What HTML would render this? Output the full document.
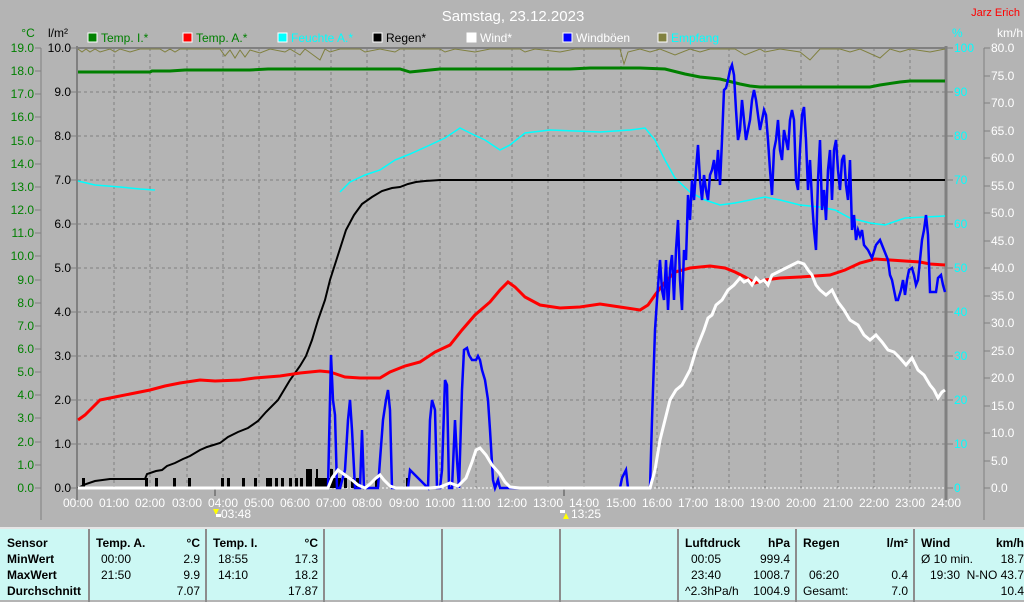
<!DOCTYPE html>
<html><head><meta charset="utf-8"><style>
html,body{margin:0;padding:0;width:1024px;height:600px;overflow:hidden;background:#b4b4b4;font-family:"Liberation Sans",sans-serif}
svg{position:absolute;left:0;top:0}
.p{position:absolute;left:0;top:527px;width:1024px;height:73px;background:#ccf8f4;border-top:2px solid #e6e6e6;box-sizing:border-box}
.c{position:absolute;top:0;height:73px;border-left:2px solid #8c8c8c;font-size:12px;color:#000}
.r{position:absolute;white-space:nowrap}
b{font-weight:bold}
</style></head><body>
<svg width="1024" height="527" font-family="Liberation Sans, sans-serif" font-size="12">
<text x="513" y="21" fill="#fff" font-size="15" text-anchor="middle">Samstag, 23.12.2023</text>
<text x="1020" y="16" fill="#f00" font-size="11" text-anchor="end">Jarz Erich</text>
<text x="28" y="37" fill="#008000" text-anchor="middle">°C</text>
<text x="58" y="37" fill="#000" text-anchor="middle">l/m²</text>
<text x="952" y="37" fill="#0ff">%</text>
<text x="1010" y="37" fill="#fff" text-anchor="middle">km/h</text>
<g stroke="#fff" stroke-width="1">
<rect x="88" y="33" width="9" height="9" fill="#008000"/>
<rect x="183" y="33" width="9" height="9" fill="#f00"/>
<rect x="278" y="33" width="9" height="9" fill="#0ff"/>
<rect x="373" y="33" width="9" height="9" fill="#000"/>
<rect x="467" y="33" width="9" height="9" fill="#fff"/>
<rect x="563" y="33" width="9" height="9" fill="#00f"/>
<rect x="658" y="33" width="9" height="9" fill="#808040"/>
</g>
<text x="101" y="42" fill="#008000">Temp. I.*</text>
<text x="196" y="42" fill="#008000">Temp. A.*</text>
<text x="291" y="42" fill="#0ff">Feuchte A.*</text>
<text x="386" y="42" fill="#000">Regen*</text>
<text x="480" y="42" fill="#fff">Wind*</text>
<text x="576" y="42" fill="#fff">Windböen</text>
<text x="671" y="42" fill="#0ff">Empfang</text>
<g stroke="#808080" stroke-dasharray="3,3" stroke-width="1">
<path d="M114 48V488M150 48V488M187 48V488M223 48V488M259 48V488M295 48V488M331 48V488M367 48V488M404 48V488M440 48V488M476 48V488M512 48V488M548 48V488M584 48V488M621 48V488M657 48V488M693 48V488M729 48V488M765 48V488M801 48V488M838 48V488M874 48V488M910 48V488"/>
<path d="M78 92H945M78 136H945M78 180H945M78 224H945M78 268H945M78 312H945M78 356H945M78 400H945M78 444H945"/>
</g>
<path d="M78 488H945" stroke="#fff" stroke-width="1" stroke-dasharray="2,2"/>
<path d="M78 48H945" stroke="#808080" stroke-width="2"/>
<g stroke="#808080" fill="none">
<path d="M77 46V500" stroke-width="2"/>
<path d="M41 48V520"/>
<path d="M946 46V500" stroke-width="3"/>
<path d="M984 48V520"/>
<path d="M35 48h6M35 71h6M35 94h6M35 117h6M35 141h6M35 164h6M35 187h6M35 210h6M35 233h6M35 256h6M35 280h6M35 303h6M35 326h6M35 349h6M35 372h6M35 395h6M35 418h6M35 442h6M35 465h6M35 488h6"/>
<path d="M71 48h6M71 92h6M71 136h6M71 180h6M71 224h6M71 268h6M71 312h6M71 356h6M71 400h6M71 444h6M71 488h6"/>
<path d="M947 48h6M947 92h6M947 136h6M947 180h6M947 224h6M947 268h6M947 312h6M947 356h6M947 400h6M947 444h6M947 488h6"/>
<path d="M984 48h6M984 76h6M984 103h6M984 131h6M984 158h6M984 186h6M984 213h6M984 241h6M984 268h6M984 296h6M984 323h6M984 351h6M984 378h6M984 406h6M984 433h6M984 461h6M984 488h6"/>
<path d="M215 488v8M564 488v8" stroke-width="2"/>
</g>
<g fill="#008000" text-anchor="end">
<text x="34" y="52">19.0</text><text x="34" y="75">18.0</text><text x="34" y="98">17.0</text><text x="34" y="121">16.0</text><text x="34" y="145">15.0</text><text x="34" y="168">14.0</text><text x="34" y="191">13.0</text><text x="34" y="214">12.0</text><text x="34" y="237">11.0</text><text x="34" y="260">10.0</text><text x="34" y="284">9.0</text><text x="34" y="307">8.0</text><text x="34" y="330">7.0</text><text x="34" y="353">6.0</text><text x="34" y="376">5.0</text><text x="34" y="399">4.0</text><text x="34" y="422">3.0</text><text x="34" y="446">2.0</text><text x="34" y="469">1.0</text><text x="34" y="492">0.0</text>
</g>
<g fill="#000" text-anchor="end">
<text x="71" y="52">10.0</text><text x="71" y="96">9.0</text><text x="71" y="140">8.0</text><text x="71" y="184">7.0</text><text x="71" y="228">6.0</text><text x="71" y="272">5.0</text><text x="71" y="316">4.0</text><text x="71" y="360">3.0</text><text x="71" y="404">2.0</text><text x="71" y="448">1.0</text><text x="71" y="492">0.0</text>
</g>
<g fill="#0ff">
<text x="954" y="52">100</text><text x="954" y="96">90</text><text x="954" y="140">80</text><text x="954" y="184">70</text><text x="954" y="228">60</text><text x="954" y="272">50</text><text x="954" y="316">40</text><text x="954" y="360">30</text><text x="954" y="404">20</text><text x="954" y="448">10</text><text x="954" y="492">0</text>
</g>
<g fill="#fff">
<text x="991" y="52">80.0</text><text x="991" y="80">75.0</text><text x="991" y="107">70.0</text><text x="991" y="135">65.0</text><text x="991" y="162">60.0</text><text x="991" y="190">55.0</text><text x="991" y="217">50.0</text><text x="991" y="245">45.0</text><text x="991" y="272">40.0</text><text x="991" y="300">35.0</text><text x="991" y="327">30.0</text><text x="991" y="355">25.0</text><text x="991" y="382">20.0</text><text x="991" y="410">15.0</text><text x="991" y="437">10.0</text><text x="991" y="465">5.0</text><text x="991" y="492">0.0</text>
</g>
<g fill="#fff" text-anchor="middle">
<text x="78" y="507">00:00</text><text x="114" y="507">01:00</text><text x="150" y="507">02:00</text><text x="187" y="507">03:00</text><text x="223" y="507">04:00</text><text x="259" y="507">05:00</text><text x="295" y="507">06:00</text><text x="331" y="507">07:00</text><text x="367" y="507">08:00</text><text x="404" y="507">09:00</text><text x="440" y="507">10:00</text><text x="476" y="507">11:00</text><text x="512" y="507">12:00</text><text x="548" y="507">13:00</text><text x="584" y="507">14:00</text><text x="621" y="507">15:00</text><text x="657" y="507">16:00</text><text x="693" y="507">17:00</text><text x="729" y="507">18:00</text><text x="765" y="507">19:00</text><text x="801" y="507">20:00</text><text x="838" y="507">21:00</text><text x="874" y="507">22:00</text><text x="910" y="507">23:00</text><text x="946" y="507">24:00</text>
</g>
<text x="221" y="518" fill="#fff">03:48</text>
<text x="571" y="518" fill="#fff">13:25</text>
<path d="M213 509l3 6 3-6z" fill="#ff0"/><rect x="216" y="514" width="5" height="3" fill="#fff"/>
<path d="M563 519l3-6 3 6z" fill="#ff0"/><rect x="560" y="510" width="5" height="3" fill="#fff"/>
<polyline fill="none" stroke="#808040" stroke-width="1" points="78,49 82,52 86,49 90,52 95,49 100,52 110,49 115,52 120,49 130,52 140,49 160,49 165,52 170,49 175,52 180,49 220,49 225,56 230,50 235,58 240,50 245,57 250,50 260,53 270,49 285,52 290,49 300,55 305,49 320,60 325,49 330,52 340,49 360,49 365,52 380,49 395,52 400,49 440,49 445,52 455,49 475,52 490,49 520,49 525,52 535,49 560,52 575,49 620,49 624,64 628,52 640,49 650,52 660,49 675,55 690,49 700,52 710,49 735,49 745,55 760,49 765,52 780,49 800,52 810,60 820,49 840,49 850,52 860,49 880,58 890,49 900,52 910,49 930,52 945,49"/>
<polyline fill="none" stroke="#008000" stroke-width="3" points="78,72 150,72 152,71 170,71 185,70 250,70 268,69 300,69 400,69 410,72 420,71 440,69 570,69 590,68 640,68 665,69 685,74 700,77 720,79 740,84 750,86 760,87 870,87 880,85 900,82 910,81 945,81"/>
<polyline fill="none" stroke="#0ff" stroke-width="1.5" points="78,181 95,185 120,187 140,189 155,190"/>
<polyline fill="none" stroke="#0ff" stroke-width="1.5" points="340,192 350,182 365,175 380,170 395,160 410,154 430,145 445,138 460,128 470,133 485,140 500,150 510,145 525,133 550,130 600,132 630,130 645,128 655,140 665,160 675,178 690,192 705,200 720,205 735,203 750,200 765,197 780,200 800,205 820,207 835,210 850,218 870,223 885,225 905,218 945,216"/>
<polyline fill="none" stroke="#000" stroke-width="2" points="78,488 86,484 95,481 110,479 145,479 147,474 156,471 162,470 167,466 175,463 183,459 190,456 200,450 207,447 220,443 228,437 238,432 248,428 258,421 266,412 278,400 290,380 300,366 306,356 312,340 318,320 325,300 330,280 338,255 346,230 354,215 362,204 372,197 382,191 392,188 400,187 408,184 416,182 425,181 440,180 945,180"/>
<g fill="#000">
<rect x="82" y="478" width="3" height="10"/><rect x="145" y="478" width="3" height="10"/><rect x="155" y="478" width="3" height="10"/><rect x="173" y="478" width="3" height="10"/><rect x="188" y="478" width="3" height="10"/><rect x="221" y="478" width="3" height="10"/><rect x="227" y="478" width="3" height="10"/><rect x="242" y="478" width="3" height="10"/><rect x="254" y="478" width="3" height="10"/><rect x="266" y="478" width="6" height="10"/><rect x="275" y="478" width="3" height="10"/><rect x="281" y="478" width="3" height="10"/><rect x="289" y="478" width="3" height="10"/><rect x="295" y="478" width="3" height="10"/><rect x="300" y="478" width="3" height="10"/><rect x="306" y="469" width="6" height="19"/><rect x="315" y="478" width="3" height="10"/><rect x="316" y="469" width="2" height="19"/><rect x="318" y="478" width="23" height="10"/><rect x="330" y="469" width="3" height="19"/><rect x="344" y="478" width="3" height="10"/><rect x="351" y="478" width="3" height="10"/><rect x="356" y="478" width="3" height="10"/><rect x="375" y="478" width="3" height="10"/><rect x="406" y="478" width="3" height="10"/>
</g>
<polyline fill="none" stroke="#f00" stroke-width="3" points="78,420 85,415 92,408 100,400 115,397 130,394 150,390 165,386 180,383 200,380 215,381 240,380 255,378 280,376 300,373 320,371 330,372 345,377 360,378 380,378 390,372 405,366 420,362 435,352 450,345 462,330 475,315 490,302 500,290 508,282 515,287 525,297 540,305 560,308 580,307 600,304 620,307 640,310 648,305 655,295 665,282 675,272 690,268 710,266 725,268 735,272 745,277 755,283 765,280 780,278 800,277 830,275 845,270 860,263 875,259 890,260 905,261 920,262 930,264 945,265"/>
<polyline fill="none" stroke="#00f" stroke-width="2.5" points="78,488 328,488 330,400 331,355 333,400 335,415 337,488 340,488 345,470 348,420 350,400 352,430 355,488 360,488 362,430 364,488 368,488 378,488 380,460 383,420 386,400 388,390 390,410 392,488 396,488 408,488 410,470 428,488 430,420 432,400 435,410 437,488 440,488 442,470 445,380 447,385 449,488 452,488 455,420 457,460 459,488 462,390 464,350 467,348 469,355 472,360 476,360 478,356 480,360 482,370 485,380 488,400 490,430 493,480 495,488 498,480 500,488 620,488 622,478 626,470 628,488 650,488 652,420 655,330 657,300 660,260 662,290 664,300 666,260 668,310 670,270 672,255 674,300 676,250 678,220 680,280 682,310 684,250 686,260 688,195 690,220 692,180 694,200 696,170 698,145 700,180 702,200 704,175 706,190 708,200 710,175 712,170 714,160 716,180 718,150 720,185 722,140 724,90 726,88 728,80 730,70 732,65 734,75 736,110 738,140 740,130 742,100 744,120 746,140 748,130 750,120 752,100 754,90 756,100 758,115 760,130 762,120 764,110 766,115 768,140 770,170 772,195 774,150 776,140 778,120 780,150 782,160 784,130 786,140 788,150 790,120 792,110 794,120 796,180 798,190 800,150 802,115 804,107 806,140 808,190 810,160 812,200 814,230 816,250 818,180 820,140 822,210 824,190 826,220 828,170 830,150 832,200 834,150 836,140 838,170 840,190 842,160 844,155 846,185 848,200 850,160 852,230 854,215 856,240 858,230 860,236 862,230 864,245 868,250 872,258 876,245 880,240 884,250 888,260 890,275 892,280 894,290 896,300 898,300 901,290 903,280 905,295 907,280 909,270 912,268 914,275 916,285 918,280 920,260 922,240 924,230 926,215 928,235 930,292 936,292 938,278 941,275 943,285 945,292"/>
<polyline fill="none" stroke="#fff" stroke-width="3" points="78,488 328,488 332,478 338,470 345,475 352,480 358,485 365,488 370,484 376,478 380,475 384,480 390,486 396,488 430,488 440,487 450,483 458,486 466,478 472,462 476,450 480,448 486,455 492,465 500,474 505,482 510,487 520,488 650,488 655,470 660,440 665,420 670,400 676,390 682,385 690,370 696,350 700,340 704,330 708,318 712,315 716,305 722,300 728,290 734,285 740,278 744,282 748,280 752,285 756,278 760,282 764,280 768,285 772,275 778,272 786,268 792,265 798,262 804,264 808,270 812,275 816,285 820,290 826,295 832,290 838,302 844,310 850,320 858,325 864,335 870,340 876,335 882,342 888,350 894,352 900,358 906,365 912,358 918,370 924,375 930,385 934,390 938,398 942,392 945,390"/>
</svg>
<div class="p">
<div class="c" style="left:-2px;width:90px;border:0">
<div class="r" style="left:9px;top:7px"><b>Sensor</b></div>
<div class="r" style="left:9px;top:23px"><b>MinWert</b></div>
<div class="r" style="left:9px;top:39px"><b>MaxWert</b></div>
<div class="r" style="left:9px;top:55px"><b>Durchschnitt</b></div>
</div>
<div class="c" style="left:88px;width:115px">
<div class="r" style="left:6px;top:7px"><b>Temp. A.</b></div><div class="r" style="right:5px;top:7px"><b>°C</b></div>
<div class="r" style="left:11px;top:23px">00:00</div><div class="r" style="right:5px;top:23px">2.9</div>
<div class="r" style="left:11px;top:39px">21:50</div><div class="r" style="right:5px;top:39px">9.9</div>
<div class="r" style="right:5px;top:55px">7.07</div>
</div>
<div class="c" style="left:205px;width:116px">
<div class="r" style="left:6px;top:7px"><b>Temp. I.</b></div><div class="r" style="right:5px;top:7px"><b>°C</b></div>
<div class="r" style="left:11px;top:23px">18:55</div><div class="r" style="right:5px;top:23px">17.3</div>
<div class="r" style="left:11px;top:39px">14:10</div><div class="r" style="right:5px;top:39px">18.2</div>
<div class="r" style="right:5px;top:55px">17.87</div>
</div>
<div class="c" style="left:323px;width:116px"></div>
<div class="c" style="left:441px;width:116px"></div>
<div class="c" style="left:559px;width:116px"></div>
<div class="c" style="left:677px;width:116px">
<div class="r" style="left:6px;top:7px"><b>Luftdruck</b></div><div class="r" style="right:5px;top:7px"><b>hPa</b></div>
<div class="r" style="left:12px;top:23px">00:05</div><div class="r" style="right:5px;top:23px">999.4</div>
<div class="r" style="left:12px;top:39px">23:40</div><div class="r" style="right:5px;top:39px">1008.7</div>
<div class="r" style="left:6px;top:55px">^2.3hPa/h</div><div class="r" style="right:5px;top:55px">1004.9</div>
</div>
<div class="c" style="left:795px;width:116px">
<div class="r" style="left:6px;top:7px"><b>Regen</b></div><div class="r" style="right:5px;top:7px"><b>l/m²</b></div>
<div class="r" style="left:12px;top:39px">06:20</div><div class="r" style="right:5px;top:39px">0.4</div>
<div class="r" style="left:6px;top:55px">Gesamt:</div><div class="r" style="right:5px;top:55px">7.0</div>
</div>
<div class="c" style="left:913px;width:111px">
<div class="r" style="left:6px;top:7px"><b>Wind</b></div><div class="r" style="right:2px;top:7px"><b>km/h</b></div>
<div class="r" style="left:6px;top:23px">Ø 10 min.</div><div class="r" style="right:2px;top:23px">18.7</div>
<div class="r" style="left:15px;top:39px">19:30</div><div class="r" style="right:2px;top:39px">N-NO 43.7</div>
<div class="r" style="right:2px;top:55px">10.4</div>
</div>
</div>
</body></html>
